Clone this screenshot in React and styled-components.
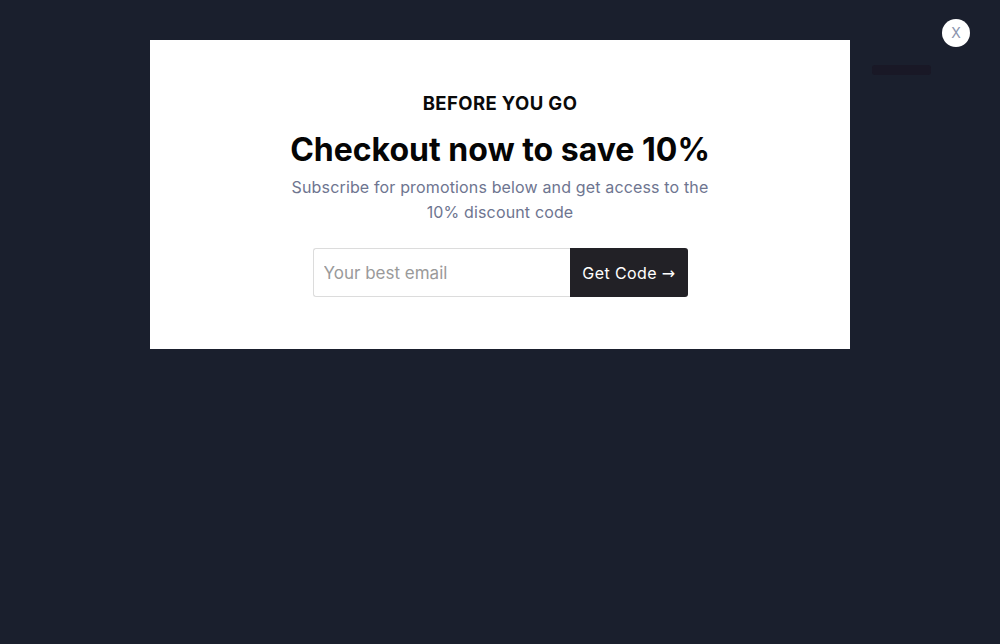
import React from "react";
import styled, { createGlobalStyle } from "styled-components";

const Global = createGlobalStyle`
  html, body { margin: 0; padding: 0; }
  body {
    background: #1a1f2d;
    font-family: Inter, "Noto Sans", sans-serif;
  }
  * { box-sizing: border-box; }
`;

const Page = styled.div`
  position: relative;
  width: 1000px;
  height: 644px;
  background: #1a1f2d;
  overflow: hidden;
  display: flex;
  justify-content: center;
  padding-top: 40px;
`;

const Ghost = styled.div`
  position: absolute;
  left: 872px;
  top: 65px;
  width: 59px;
  height: 10px;
  border-radius: 3px;
  background: #191826;
`;

const Modal = styled.div`
  width: 700px;
  height: 309px;
  background: #ffffff;
  display: flex;
  flex-direction: column;
  align-items: center;
  padding-top: 51px;
`;

const Eyebrow = styled.div`
  font-size: 18.5px;
  font-weight: 700;
  color: #0a0a0a;
  line-height: 24px;
  letter-spacing: 0.4px;
`;

const Title = styled.h1`
  margin: 15px 0 0;
  font-size: 32px;
  font-weight: 700;
  color: #050505;
  line-height: 40px;
`;

const Sub = styled.p`
  margin: 5px 0 0;
  width: 440px;
  text-align: center;
  font-size: 16px;
  line-height: 25px;
  letter-spacing: 0.15px;
  color: #6e7590;
`;

const Form = styled.form`
  display: flex;
  margin-top: 23px;
`;

const Email = styled.input`
  width: 257px;
  height: 49px;
  border: 1px solid #dcdcdc;
  border-right: none;
  border-radius: 3px 0 0 3px;
  padding: 0 10px;
  font-family: Inter, "Noto Sans", sans-serif;
  font-size: 17px;
  color: #222;
  outline: none;
  &::placeholder { color: #9a9a9a; }
`;

const Submit = styled.button`
  width: 118px;
  height: 49px;
  border: none;
  border-radius: 0 3px 3px 0;
  background: #222126;
  color: #ffffff;
  font-family: Inter, "Noto Sans", sans-serif;
  font-size: 16px;
  letter-spacing: 0.4px;
  padding: 0 0 0 1px;
  cursor: pointer;
`;

const Arrow = styled.span`
  font-family: "Noto Sans", "DejaVu Sans", sans-serif;
`;

const Close = styled.button`
  position: absolute;
  left: 942px;
  top: 19px;
  width: 28px;
  height: 28px;
  border-radius: 50%;
  border: none;
  background: #ffffff;
  color: #8b94ad;
  font-family: Inter, "Noto Sans", sans-serif;
  font-size: 14px;
  line-height: 28px;
  padding: 0;
  text-align: center;
  cursor: pointer;
`;

export default function App() {
  return (
    <>
      <Global />
      <Page>
        <Ghost />
        <Modal>
          <Eyebrow>BEFORE YOU GO</Eyebrow>
          <Title>Checkout now to save 10%</Title>
          <Sub>Subscribe for promotions below and get access to the 10% discount code</Sub>
          <Form onSubmit={(e) => e.preventDefault()}>
            <Email type="email" placeholder="Your best email" />
            <Submit type="submit">Get Code <Arrow>→</Arrow></Submit>
          </Form>
        </Modal>
        <Close aria-label="Close">X</Close>
      </Page>
    </>
  );
}
